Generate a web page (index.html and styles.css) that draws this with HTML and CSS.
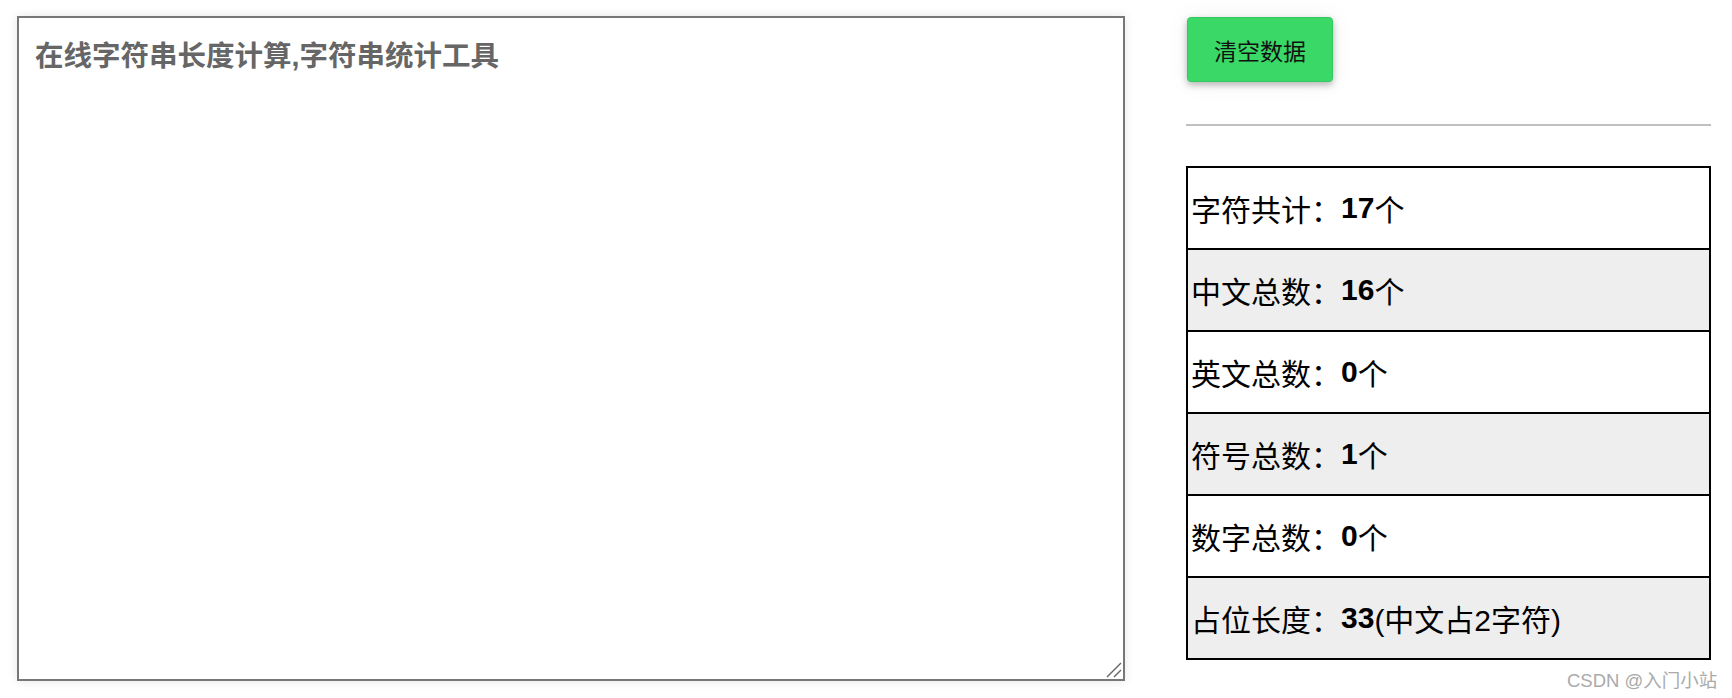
FILE: index.html
```html
<!DOCTYPE html>
<html lang="zh-CN">
<head>
<meta charset="utf-8">
<title>在线字符串长度计算</title>
<link rel="stylesheet" href="styles.css">
</head>
<body>
<div class="page">
  <div class="editor">
    <textarea class="input" spellcheck="false">在线字符串长度计算,字符串统计工具</textarea>
    <svg class="grip" width="16" height="16" viewBox="0 0 16 16" aria-hidden="true">
      <line x1="1" y1="15" x2="15" y2="1" stroke="#666" stroke-width="1.5"/>
      <line x1="8" y1="15" x2="15" y2="8" stroke="#666" stroke-width="1.5"/>
    </svg>
  </div>
  <div class="side">
    <button class="btn" type="button">清空数据</button>
    <div class="rule"></div>
    <div class="stats">
      <div class="row">字符共计：<b>17</b>个</div>
      <div class="row alt">中文总数：<b>16</b>个</div>
      <div class="row">英文总数：<b>0</b>个</div>
      <div class="row alt">符号总数：<b>1</b>个</div>
      <div class="row">数字总数：<b>0</b>个</div>
      <div class="row alt">占位长度：<b>33</b>(中文占2字符)</div>
    </div>
  </div>
</div>
<div class="watermark">CSDN @入门小站</div>
</body>
</html>
```
FILE: styles.css
```css
html, body {
  margin: 0;
  background: #fff;
}
body {
  font-family: "Liberation Sans", "Noto Sans CJK SC", sans-serif;
  color: #000;
  width: 1732px;
  height: 698px;
  overflow: hidden;
  position: relative;
}
.page {
  display: flex;
  align-items: flex-start;
  gap: 61px;
  padding: 16px 0 0 17px;
}
.editor {
  position: relative;
  width: 1108px;
  height: 665px;
}
.input {
  display: block;
  box-sizing: border-box;
  width: 1108px;
  height: 665px;
  margin: 0;
  border: 2px solid #777;
  padding: 15px 16px;
  font-family: "Liberation Sans", "Noto Sans CJK SC", sans-serif;
  font-weight: bold;
  font-size: 28.5px;
  color: #666;
  background: #fff;
  resize: none;
  outline: none;
  box-shadow: 0 0 10px rgba(0, 0, 0, 0.1);
}
.grip {
  position: absolute;
  right: 3px;
  bottom: 3px;
  pointer-events: none;
}
.side {
  width: 525px;
  display: flex;
  flex-direction: column;
}
.btn {
  align-self: flex-start;
  box-sizing: border-box;
  width: 146px;
  height: 65px;
  margin: 1px 0 0 1px;
  padding: 0;
  background: #3ad866;
  border: 1px solid #34c95e;
  border-radius: 4px;
  font-family: "Liberation Sans", "Noto Sans CJK SC", sans-serif;
  font-size: 23px;
  color: #111;
  box-shadow: 0 3px 7px rgba(0, 0, 0, 0.28), 0 0 28px rgba(0, 0, 0, 0.05);
}
.rule {
  height: 2px;
  background: #c0c0c0;
  margin-top: 42px;
}
.stats {
  margin-top: 40px;
  border: 2px solid #000;
}
.row {
  height: 80px;
  display: flex;
  align-items: center;
  padding-left: 3px;
  font-size: 30px;
  white-space: pre;
}
.row + .row {
  border-top: 2px solid #000;
}
.row.alt {
  background: #eee;
}
.row b {
  font-weight: bold;
}
.watermark {
  position: absolute;
  left: 1567px;
  top: 666px;
  font-size: 18.5px;
  color: #aaa;
  white-space: nowrap;
}
```
